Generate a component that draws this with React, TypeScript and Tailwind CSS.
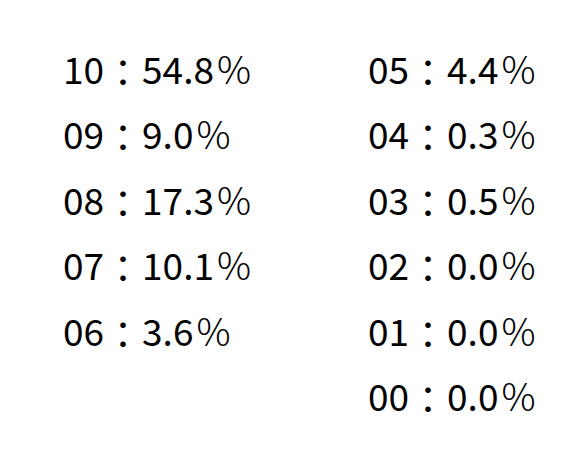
const left: [string, string][] = [
  ["10", "54.8"],
  ["09", "9.0"],
  ["08", "17.3"],
  ["07", "10.1"],
  ["06", "3.6"],
];
const right: [string, string][] = [
  ["05", "4.4"],
  ["04", "0.3"],
  ["03", "0.5"],
  ["02", "0.0"],
  ["01", "0.0"],
  ["00", "0.0"],
];

function Row({ k, v }: { k: string; v: string }) {
  return (
    <div className="flex items-center h-[65.4px] whitespace-nowrap">
      <span>{k}</span>
      <span className="inline-block w-[38px] text-center relative top-[3px]">：</span>
      <span>{v}</span>
      <span className="inline-block w-[32px] ml-[3px] text-center font-light text-[38px] relative top-[-1px]">%</span>
    </div>
  );
}

export default function App() {
  return (
    <div
      className="w-[584px] h-[470px] bg-white text-black flex pt-[36px] pl-[63px] text-[37px] leading-[65.4px]"
      style={{ fontFamily: '"Noto Sans CJK JP", "Noto Sans", sans-serif' }}
    >
      <div className="w-[305px] flex flex-col">
        {left.map(([k, v]) => (
          <Row key={k} k={k} v={v} />
        ))}
      </div>
      <div className="flex flex-col">
        {right.map(([k, v]) => (
          <Row key={k} k={k} v={v} />
        ))}
      </div>
    </div>
  );
}
